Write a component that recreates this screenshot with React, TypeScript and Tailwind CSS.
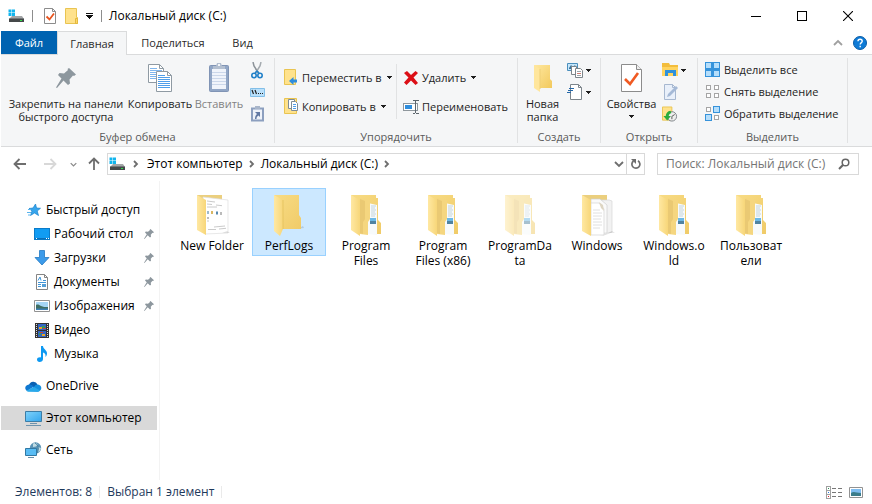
import type { ReactNode } from 'react';
import clsx from 'clsx';

/* ---------- icons ---------- */

function DriveIcon() {
  return (
    <svg width="16" height="16" viewBox="0 0 16 16">
      <path d="M4 8h10l2 3H1z" fill="#a3a5a7" />
      <path d="M1 10.500h15V14H1z" fill="#45484a" />
      <path d="M12 12h2v1h-2z" fill="#2fe04a" />
      <path d="M.5 1.500h3v3h-3zM4 1.500h3v3H4zM.5 5h3v3h-3zM4 5h3v3H4z" fill="#12b5ee" />
    </svg>
  );
}

function PageCheckIcon({ size }: { size: 'small' | 'large' }) {
  if (size === 'small') {
    return (
      <svg width="14" height="16" viewBox="0 0 14 16">
        <path d="M1.500 .5h8l3 3v12h-11z" fill="#fff" stroke="#8c8c8c" />
        <path d="M9.500 .5v3h3" fill="none" stroke="#8c8c8c" />
        <path d="M3.500 8.500l3 3 4.500-6" fill="none" stroke="#e8541e" strokeWidth="1.800" />
      </svg>
    );
  }
  return (
    <svg width="24" height="32" viewBox="0 0 24 32">
      <path d="M1.500 2.500h15l5 5v22h-20z" fill="#fff" stroke="#8c8c8c" />
      <path d="M16.500 2.500v5h5" fill="#eee" stroke="#8c8c8c" />
      <path d="M5 17l5 5 8-11" fill="none" stroke="#f05a22" strokeWidth="2.600" />
    </svg>
  );
}

function SmallFolderIcon() {
  return (
    <svg width="14" height="16" viewBox="0 0 14 16">
      <path d="M.5 .5h11v9h1v6H.5z" fill="#ffe28c" stroke="#e9c451" />
      <path d="M10.500 10.500h2v5h-2z" fill="#ffd667" stroke="#e2b93f" />
    </svg>
  );
}

function Caret() {
  return (
    <svg width="5" height="3" viewBox="0 0 5 3" shapeRendering="crispEdges">
      <path d="M0 0h5v1H0zM1 1h3v1H1zM2 2h1v1H2z" fill="#1e1e1e" />
    </svg>
  );
}

function PinIcon({ size }: { size: number }) {
  return (
    <svg width={size} height={size} viewBox="0 0 20 20">
      <path d="M13 0l7 6.500-2 1.500-1-.5-3.500 4 .5 4-2 1.500L7.500 12.500 1 20l-1-.5 5.500-9L2 7l1.500-2 4.500.5 4-3.500-.5-1z" fill="#8d979e" />
    </svg>
  );
}

function CopyIcon() {
  return (
    <svg width="26" height="32" viewBox="0 0 26 32">
      <path d="M1.500 2.500h11l4 4v14h-15z" fill="#fff" stroke="#8f9aa3" />
      <path d="M12.500 2.500v4h4" fill="none" stroke="#8f9aa3" />
      <path d="M3 6.500h7M3 8.500h12M3 10.500h12M3 12.500h12M3 14.500h12M3 16.500h12" stroke="#7fb6ee" />
      <path d="M9.500 9.500h11l4 4v16h-15z" fill="#fff" stroke="#8f9aa3" />
      <path d="M20.500 9.500v4h4" fill="none" stroke="#8f9aa3" />
      <path d="M11 13.500h7M11 15.500h12M11 17.500h12M11 19.500h12M11 21.500h12M11 23.500h12M11 25.500h12" stroke="#4f9eea" />
    </svg>
  );
}

function PasteIcon() {
  return (
    <svg width="22" height="32" viewBox="0 0 22 32">
      <rect x="1.500" y="3.500" width="19" height="26" rx="1" fill="#91a6c6" stroke="#8094b5" />
      <path d="M4 7h14v20H4z" fill="#f0f4fb" />
      <path d="M4 10.500h14M4 13.500h14M4 16.500h14M4 19.500h14M4 22.500h14" stroke="#cbd7ea" />
      <path d="M5 7V4h3l1-3h4l1 3h3v3z" fill="#b3bfd0" />
      <path d="M10 2h2v2h-2z" fill="#f4f6f9" />
    </svg>
  );
}

function CutIcon() {
  return (
    <svg width="12" height="17" viewBox="0 0 12 17" fill="none">
      <path d="M2 0l1 4 5 8" stroke="#8b9298" strokeWidth="1.500" />
      <path d="M10 0L9 4l-5 8" stroke="#a4aaaf" strokeWidth="1.500" />
      <circle cx="3" cy="13.500" r="2.200" stroke="#2281c9" strokeWidth="1.600" />
      <circle cx="9" cy="13.500" r="2.200" stroke="#2281c9" strokeWidth="1.600" />
      <path d="M4 11l2-2 2 2" stroke="#2281c9" strokeWidth="1.500" />
    </svg>
  );
}

function CopyPathIcon() {
  return (
    <svg width="15" height="9" viewBox="0 0 15 9">
      <path d="M.5 .5h14v8H.5z" fill="#b9e0fb" stroke="#82bfe8" />
      <path d="M2 2l1.500 4M5 2l1.500 4" stroke="#222" strokeWidth="1.200" />
      <path d="M8 5h1v1H8zM10 5h1v1h-1zM12 5h1v1h-1z" fill="#222" />
    </svg>
  );
}

function PasteShortcutIcon() {
  return (
    <svg width="13" height="16" viewBox="0 0 13 16">
      <path d="M1 2.500h11v12H1z" fill="#eef2f9" stroke="#8c9fbf" strokeWidth="2" />
      <path d="M4 0h5v3H4z" fill="#a8b5c9" />
      <path d="M4 6h5v5L7.500 9.500C6 10.500 5.500 11 5.500 13H4c0-2.500.5-3.500 2-5z" fill="#6279a3" />
    </svg>
  );
}

function MoveToIcon() {
  return (
    <svg width="15" height="17" viewBox="0 0 15 17">
      <path d="M.5 .5h11v15H.5z" fill="#ffe28c" stroke="#e9c451" />
      <path d="M5 12l4.500-4v2.500H13v3H9.500V16z" fill="#2f8ddd" />
    </svg>
  );
}

function CopyToIcon() {
  return (
    <svg width="15" height="17" viewBox="0 0 15 17">
      <path d="M.5 .5h12v15H.5z" fill="#ffe28c" stroke="#e9c451" />
      <path d="M4.500 1.500h6v9h-6z" fill="#fff" stroke="#7f8c96" />
      <path d="M7.500 3.500h4l2 2v7h-6z" fill="#fff" stroke="#7f8c96" />
      <path d="M9 6.500h3M9 8.500h3M9 10.500h3" stroke="#4f9eea" />
    </svg>
  );
}

function DeleteIcon() {
  return (
    <svg width="14" height="14" viewBox="0 0 14 14">
      <path d="M3 0l4 4 4.500-4L14 2l-4.500 4.500L14 12l-2.500 2L7 9.500 2.500 14 0 11.500l4.500-5L0 2z" fill="#dc0f16" />
    </svg>
  );
}

function RenameIcon() {
  return (
    <svg width="16" height="16" viewBox="0 0 16 16" shapeRendering="crispEdges">
      <path d="M.5 4.500h14v7H.5z" fill="#fff" stroke="#8f979d" />
      <path d="M2 6h7v4H2z" fill="#2f8ddd" />
      <path d="M12.500 1v13M10 1h2M13 1h3M10 14.500h2M13 14.500h3" stroke="#5d666d" />
    </svg>
  );
}

function NewFolderIcon() {
  return (
    <svg width="18" height="28" viewBox="0 0 18 28">
      <defs>
        <linearGradient id="newFolderBack" x1="0" y1="0" x2="1" y2="1">
          <stop offset="0" stopColor="#ffe8a0" />
          <stop offset="1" stopColor="#f2c95d" />
        </linearGradient>
      </defs>
      <path d="M0 1h16v14l2 2v7H4z" fill="url(#newFolderBack)" />
      <path d="M0 1l6 4v23l-6-4z" fill="#ffe69c" />
      <path d="M6 5v20" stroke="#efcf77" />
    </svg>
  );
}

function NewItemIcon() {
  return (
    <svg width="16" height="16" viewBox="0 0 16 16">
      <path d="M.5 1.500h10v7H.5z" fill="#c6e7fb" stroke="#4b8fbd" />
      <path d="M2 6l2-3 2 2 2-2 2 4H2z" fill="#38749f" />
      <path d="M4.500 4.500h5v8h-5z" fill="#fff" stroke="#7d858b" />
      <path d="M8.500 6.500h5l2 2v7h-7z" fill="#fff" stroke="#7d858b" />
      <path d="M10 9.500h4M10 13.500h4" stroke="#9aa3aa" />
      <path d="M10 11.500h4" stroke="#cd7b71" />
    </svg>
  );
}

function EasyAccessIcon() {
  return (
    <svg width="16" height="16" viewBox="0 0 16 16">
      <path d="M3.500 .5h8l3 3v12h-11z" fill="#fff" stroke="#7d858b" />
      <path d="M11.500 .5v3h3" fill="none" stroke="#7d858b" />
      <path d="M2 4.500h5M1 6.500h5M0 8.500h4" stroke="#2467a8" />
    </svg>
  );
}

function OpenIcon() {
  return (
    <svg width="16" height="16" viewBox="0 0 16 16">
      <path d="M0 1h7l1 2h8v11H0z" fill="#f3bd3c" />
      <path d="M0 5h16v9H0z" fill="#ffd45f" />
      <path d="M3 8h11v6h-3v-3H6v3H3z" fill="#2e91dc" />
    </svg>
  );
}

function EditIcon() {
  return (
    <svg width="15" height="16" viewBox="0 0 15 16">
      <path d="M1.500 .5h8l3 3v12h-11z" fill="#e9f0fa" stroke="#a7b8d0" />
      <path d="M9.500 .5v3h3" fill="none" stroke="#a7b8d0" />
      <path d="M4 13l1-3 8-8 2 2-8 8z" fill="#a5b9d6" />
    </svg>
  );
}

function HistoryIcon() {
  return (
    <svg width="17" height="17" viewBox="0 0 17 17">
      <path d="M.5 .5h10v14H.5z" fill="#ffe28c" stroke="#e9c451" />
      <circle cx="10.500" cy="10.500" r="5" fill="#eee" stroke="#7b8186" />
      <path d="M10.500 10.500l3-2M10.500 10.500v3" stroke="#555" />
      <path d="M9 4.500A6 6 0 0 0 4 10H1.500l4 5 4-5H7a4 4 0 0 1 3-3z" fill="#2cac3c" />
    </svg>
  );
}

const bigCells = ['M.5 .5h6v6h-6z', 'M8.500 .5h6v6h-6z', 'M.5 8.500h6v6h-6z', 'M8.500 8.500h6v6h-6z'];
const smallCells = ['M1.500 1.500h4v4h-4z', 'M9.500 1.500h4v4h-4z', 'M1.500 9.500h4v4h-4z', 'M9.500 9.500h4v4h-4z'];

function SelectIcon({ on }: { on: boolean[] }) {
  return (
    <svg width="16" height="16" viewBox="0 0 16 16" shapeRendering="crispEdges">
      {on.every(Boolean) && <path d="M0 0h15v15H0z" fill="#3693db" />}
      {on.map((active, i) => (
        <path
          key={bigCells[i]}
          d={active ? bigCells[i] : smallCells[i]}
          fill={active ? '#b5defb' : '#fff'}
          stroke={active ? '#3693db' : '#a5a5a5'}
        />
      ))}
    </svg>
  );
}

function ArrowIcon({ className, direction = 'left' }: { className: string; direction?: 'left' | 'right' | 'up' }) {
  const turn = { left: 0, up: 90, right: 180 }[direction];
  return (
    <svg width="14" height="14" viewBox="0 0 14 14" className={className}>
      <path d="M13 7H2M6.500 2L1.500 7l5 5" transform={`rotate(${turn} 7 7)`} fill="none" stroke="currentColor" strokeWidth="1.800" />
    </svg>
  );
}

function Chevron({ d, size, className }: { d: string; size: number; className: string }) {
  return (
    <svg width={size} height={size} viewBox="0 0 10 10" className={className}>
      <path d={d} fill="none" stroke="currentColor" strokeWidth="1.800" />
    </svg>
  );
}

function QuickAccessIcon() {
  return (
    <svg width="16" height="16" viewBox="0 0 16 16">
      <path d="M9.500 2l1 4 4 .3-3.300 2.700 1.300 4.500-4-2.500-4 2.500 1.500-4.500-3-2.500 4-.5z" fill="#37a5ec" stroke="#1681cd" strokeWidth=".7" />
      <path d="M2 7.500h3M1 10.500h4M2 13h2" stroke="#58b4ee" />
    </svg>
  );
}

function DesktopIcon() {
  return (
    <svg width="16" height="12" viewBox="0 0 16 12" shapeRendering="crispEdges">
      <path d="M.5 .5h15v11H.5z" fill="#119cf3" stroke="#0a7bc9" />
      <path d="M1 10h14v1H1z" fill="#0b6fb9" />
      <path d="M2 10h1v1H2zM12 10h1v1h-1zM14 10h1v1h-1z" fill="#fff" />
    </svg>
  );
}

function DownloadsIcon() {
  return (
    <svg width="16" height="16" viewBox="0 0 16 16">
      <path d="M5.500 .5h5v7h4.500L8 15 1 7.500h4.500z" fill="#3c9bea" stroke="#2378c2" strokeWidth=".8" />
    </svg>
  );
}

function DocumentsIcon() {
  return (
    <svg width="12" height="16" viewBox="0 0 12 16">
      <path d="M.5 .5h8l3 3v12H.5z" fill="#fff" stroke="#858585" />
      <path d="M8.500 .5v3h3" fill="none" stroke="#858585" />
      <path d="M2 6.500L4 3l1 3.500M7 6.500h3M2 8.500h8M2 10.500h3M2 12.500h3" fill="none" stroke="#3f95d8" />
      <path d="M6 10h4v3H6z" fill="#569fd6" />
    </svg>
  );
}

function PictureIcon() {
  return (
    <svg width="16" height="12" viewBox="0 0 16 12">
      <path d="M.5 .5h15v11H.5z" fill="#fff" stroke="#929292" />
      <path d="M2 2h12v8H2z" fill="#a5d5f5" />
      <path d="M2 5c2-1 3 0 5 1s4 1 7 1v3H2z" fill="#3f6e63" />
      <path d="M2 8.500h12V10H2z" fill="#3c7fb5" />
    </svg>
  );
}

function VideoIcon() {
  return (
    <svg width="14" height="15" viewBox="0 0 14 15" shapeRendering="crispEdges">
      <path d="M0 0h14v15H0z" fill="#333" />
      <path d="M3 1h8v6H3zM3 8h8v6H3z" fill="#3465c3" />
      <path d="M4 4h3v2H4zM7 11h3v2H7z" fill="#e7a527" />
      <path d="M7 3h3v2H7zM4 10h2v2H4z" fill="#379b54" />
      <path d="M8 5h3v1H8zM5 9h3v1H5z" fill="#ca4138" />
      <path d="M1.500 1v14M12.500 1v14" stroke="#ddd" strokeDasharray="1 1" />
    </svg>
  );
}

function MusicIcon() {
  return (
    <svg width="12" height="16" viewBox="0 0 12 16">
      <path d="M5 0h2c0 3 4 4 4 7.500 0 2-1 3-1.500 3.500.5-3-1-4-2.500-4.500V13c0 2-1.500 3-3.500 3C2 16 1 15 1 13.500 1 12 3 11 5 11.500z" fill="#0d99f2" />
    </svg>
  );
}

function OneDriveIcon() {
  return (
    <svg width="17" height="11" viewBox="0 0 17 11">
      <path d="M4 4a4.500 4.500 0 0 1 8.500-.5L9 7z" fill="#0a61b3" />
      <path d="M4 3.500c2-.3 3 .5 5 2L2 10C-1 8 0 4 4 3.500z" fill="#0f78d1" />
      <path d="M9 6c1-2 2.500-2.700 4-2.500 4 .5 5 6-.5 7.300L2 10z" fill="#1490df" />
      <path d="M1.500 9.700L9 6l6 3.500c-.7.9-1.500 1.300-3 1.300H4c-1 0-2-.5-2.500-1.100z" fill="#29a9ea" />
    </svg>
  );
}

function ComputerIcon() {
  return (
    <svg width="17" height="15" viewBox="0 0 17 15">
      <defs>
        <linearGradient id="screen" x1="0" y1="0" x2="1" y2="1">
          <stop offset="0" stopColor="#80d3fb" />
          <stop offset="1" stopColor="#32a5ed" />
        </linearGradient>
      </defs>
      <path d="M.5 .5h16v10H.5z" fill="url(#screen)" stroke="#3c7da6" />
      <path d="M5 12.500h7M1 14.500h15" stroke="#6d93ad" />
    </svg>
  );
}

function NetworkIcon() {
  return (
    <svg width="17" height="16" viewBox="0 0 17 16">
      <circle cx="10.500" cy="6" r="5.700" fill="#5b93b5" />
      <path d="M8 1.500c2-1 4-.5 5 1l-2 2-3 .5zM13 5l3 1-1 3-2 1z" fill="#c1dbe2" />
      <path d="M10 1c4 2 4 7 2 10" fill="none" stroke="#437f9f" />
      <path d="M.5 6.500h11v7H.5z" fill="#58bcf4" stroke="#3178a3" />
      <path d="M3 15.500h6" stroke="#688fa9" />
    </svg>
  );
}

type FolderKind = 'list' | 'empty' | 'files' | 'papers';

function FolderIcon({ kind, faded }: { kind: FolderKind; faded?: boolean }) {
  return (
    <svg width="36" height="42" viewBox="0 0 36 42" className={faded ? 'opacity-50' : ''}>
      <defs>
        <linearGradient id="folderBack" x1="0" y1="0" x2="1" y2="1">
          <stop offset="0" stopColor="#f8dc85" />
          <stop offset="1" stopColor="#f0cb68" />
        </linearGradient>
        <linearGradient id="folderFront" x1="0" y1="0" x2="1" y2="0">
          <stop offset="0" stopColor="#ffe8a2" />
          <stop offset="1" stopColor="#f7d679" />
        </linearGradient>
      </defs>
      {kind === 'empty' && (
        <>
          <path d="M26 35l6-3 1 2-8 1z" fill="#000" opacity=".12" />
          <path d="M3 1h25v20l2 3v11H10z" fill="url(#folderBack)" />
          <path d="M3 1l9 5v29l-3 7-6-5z" fill="url(#folderFront)" />
          <path d="M12 6v29" stroke="#ddb853" strokeWidth=".6" />
        </>
      )}
      {kind === 'list' && (
        <>
          <path d="M3 1h25v6H3z" fill="#ebcf7e" />
          <path d="M9 3l25 3v33l-23 1z" fill="#fff" stroke="#dedede" strokeWidth=".7" />
          <path d="M13 7l8 1M13 10l5 .5M22 11l6 .7M13 13h10M13 27h2M20 33l11-1M14 35.500h8M25 35l7-.7" stroke="#bdbdbd" strokeWidth=".8" />
          <path d="M13 17h2v3h-2z" fill="#9dbace" />
          <path d="M17 17h2v3h-2z" fill="#d9b763" />
          <path d="M22 17.500h2v3h-2z" fill="#5688b0" />
          <path d="M26 18h2v3h-2zM13 23h2v2h-2z" fill="#bbb" />
          <path d="M3 1l9 5v35l-9-5z" fill="url(#folderFront)" />
          <path d="M33 37l3 2-8 0z" fill="#000" opacity=".1" />
        </>
      )}
      {kind === 'files' && (
        <>
          <path d="M3 1h25v3h2v22l3 3v11H10z" fill="url(#folderBack)" />
          <path d="M20 9l9 2v30l-9-1z" fill="#f7fafb" />
          <path d="M23 12h5M23 14h4M23 16h5M23 18h4M23 20h5M23 22h4" stroke="#b7cad4" strokeWidth=".8" />
          <path d="M22 24h6v3h-6z" fill="#6cb9e6" />
          <path d="M22 27h6v3h-6z" fill="#326d91" opacity=".85" />
          <path d="M12 4l10 2v19l-2 3v13l-8-1z" fill="#f5d67f" />
          <path d="M12 5l5 2v18l-2 3v12l-3-1z" fill="#e3c06b" opacity=".6" />
          <path d="M3 1l9 5v36l-9-6z" fill="url(#folderFront)" />
        </>
      )}
      {kind === 'papers' && (
        <>
          <path d="M3 1h25v6H3z" fill="#ebcf7e" />
          <path d="M14 6h16l3 1v31l-8 3-11-1z" fill="#f2f2f2" stroke="#d7d7d7" strokeWidth=".7" />
          <path d="M12 5h9l7 6v28l-16 1z" fill="#fafafa" stroke="#cfcfcf" strokeWidth=".7" />
          <path d="M12 9h8l5 6v26H12z" fill="#fff" stroke="#d2d2d2" strokeWidth=".7" />
          <path d="M14 16h7M14 19h9M14 22h9M14 25h8M14 28h9M14 31h9M14 34h7" stroke="#e0e0e0" />
          <path d="M20 8l4 3 1 6-3-3z" fill="#ddd5c2" />
          <path d="M3 1l9 5v36l-9-5z" fill="url(#folderFront)" />
          <path d="M33 37l3 2-8 0z" fill="#000" opacity=".1" />
        </>
      )}
    </svg>
  );
}

/* ---------- ribbon ---------- */

function RibbonGroup({ title, className, children }: { title: string; className: string; children: ReactNode }) {
  return (
    <section className={clsx('flex shrink-0 flex-col', className)} aria-label={title}>
      <div className="flex h-[73px]">{children}</div>
      <div className="h-[18px] text-center leading-[18px] text-[#5a5a5a]">{title}</div>
    </section>
  );
}

function Separator() {
  return <div className="my-[3px] w-px shrink-0 bg-[#e1e2e3]" />;
}

function BigButton({ icon, lines, className, children }: { icon: ReactNode; lines: string[]; className: string; children?: ReactNode }) {
  return (
    <button className={clsx('flex shrink-0 flex-col items-center pt-[7px]', className)}>
      <span className="flex h-8 items-center justify-center">{icon}</span>
      <span className="mt-[3px] leading-[13px] whitespace-nowrap">
        {lines.map((line) => (
          <span key={line} className="block">{line}</span>
        ))}
      </span>
      {children}
    </button>
  );
}

function SmallButton({ icon, label, text, caret, className }: { icon: ReactNode; label: string; text?: boolean; caret?: boolean; className: string }) {
  return (
    <button className={clsx('flex items-center gap-[3px] whitespace-nowrap', className)} aria-label={label}>
      <span className="flex w-4 shrink-0 justify-center">{icon}</span>
      {text && <span>{label}</span>}
      {caret && <span className={clsx(text && 'pl-0.5')}><Caret /></span>}
    </button>
  );
}

function Ribbon() {
  return (
    <div className="flex h-[92px] overflow-hidden border-b border-[#dadbdc] bg-[#f5f6f7] text-[11px] text-[#1e1e1e]">
      <RibbonGroup title="Буфер обмена" className="w-[273px]">
        <BigButton className="w-[130px]" icon={<PinIcon size={20} />} lines={['Закрепить на панели', 'быстрого доступа']} />
        <BigButton className="w-[58px]" icon={<CopyIcon />} lines={['Копировать']} />
        <BigButton className="w-[60px] text-[#838383]" icon={<PasteIcon />} lines={['Вставить']} />
        <div className="flex flex-col pt-1">
          <SmallButton className="h-[22px]" icon={<CutIcon />} label="Вырезать" />
          <SmallButton className="h-[22px]" icon={<CopyPathIcon />} label="Скопировать путь" />
          <SmallButton className="h-[22px]" icon={<PasteShortcutIcon />} label="Вставить ярлык" />
        </div>
      </RibbonGroup>
      <Separator />
      <RibbonGroup title="Упорядочить" className="w-[242px]">
        <div className="flex w-[121px] flex-col pt-2 pl-2">
          <SmallButton className="h-[29px]" icon={<MoveToIcon />} label="Переместить в" text caret />
          <SmallButton className="h-[29px]" icon={<CopyToIcon />} label="Копировать в" text caret />
        </div>
        <div className="mt-[9px] h-[55px] w-px bg-[#e1e2e3]" />
        <div className="flex flex-col pt-2 pl-1.5">
          <SmallButton className="h-[29px]" icon={<DeleteIcon />} label="Удалить" text caret />
          <SmallButton className="h-[29px]" icon={<RenameIcon />} label="Переименовать" text />
        </div>
      </RibbonGroup>
      <Separator />
      <RibbonGroup title="Создать" className="w-[82px]">
        <BigButton className="w-[49px]" icon={<NewFolderIcon />} lines={['Новая', 'папка']} />
        <div className="flex flex-col pt-1">
          <SmallButton className="h-[22px]" icon={<NewItemIcon />} label="Создать элемент" caret />
          <SmallButton className="h-[22px]" icon={<EasyAccessIcon />} label="Простой доступ" caret />
        </div>
      </RibbonGroup>
      <Separator />
      <RibbonGroup title="Открыть" className="w-24">
        <BigButton className="w-[61px]" icon={<PageCheckIcon size="large" />} lines={['Свойства']}>
          <span className="mt-[5px]"><Caret /></span>
        </BigButton>
        <div className="flex flex-col pt-1">
          <SmallButton className="h-[22px]" icon={<OpenIcon />} label="Открыть" caret />
          <SmallButton className="h-[22px]" icon={<EditIcon />} label="Изменить" />
          <SmallButton className="h-[22px]" icon={<HistoryIcon />} label="Журнал" />
        </div>
      </RibbonGroup>
      <Separator />
      <RibbonGroup title="Выделить" className="w-[149px]">
        <div className="flex flex-col pt-1 pl-[7px]">
          <SmallButton className="h-[22px]" icon={<SelectIcon on={[true, true, true, true]} />} label="Выделить все" text />
          <SmallButton className="h-[22px]" icon={<SelectIcon on={[false, false, false, false]} />} label="Снять выделение" text />
          <SmallButton className="h-[22px]" icon={<SelectIcon on={[false, true, true, false]} />} label="Обратить выделение" text />
        </div>
      </RibbonGroup>
      <Separator />
    </div>
  );
}

/* ---------- window parts ---------- */

function TitleBar() {
  return (
    <header className="flex h-[31px] items-center pr-px pl-[7px]">
      <DriveIcon />
      <div className="mx-2 h-3 w-px bg-[#8d8d8d]" />
      <button aria-label="Свойства" className="mr-2 ml-0.5"><PageCheckIcon size="small" /></button>
      <button aria-label="Новая папка"><SmallFolderIcon /></button>
      <button aria-label="Настройка панели" className="ml-1.5 flex w-[9px] justify-center">
        <svg width="7" height="6" viewBox="0 0 7 6" shapeRendering="crispEdges">
          <path d="M0 0h7v1H0zM0 2h7v1H0zM1 3h5v1H1zM2 4h3v1H2zM3 5h1v1H3z" fill="#111" />
        </svg>
      </button>
      <div className="mx-[7px] h-3 w-px bg-[#8d8d8d]" />
      <h1 className="text-black">Локальный диск (C:)</h1>
      <div className="ml-auto flex h-full">
        <button aria-label="Свернуть" className="flex w-[46px] items-center justify-center">
          <svg width="10" height="10" viewBox="0 0 10 10" shapeRendering="crispEdges"><path d="M0 5h10v1H0z" /></svg>
        </button>
        <button aria-label="Развернуть" className="flex w-[46px] items-center justify-center">
          <svg width="10" height="10" viewBox="0 0 10 10" shapeRendering="crispEdges"><path d="M.5 .5h9v9h-9z" fill="none" stroke="#000" /></svg>
        </button>
        <button aria-label="Закрыть" className="flex w-[46px] items-center justify-center">
          <svg width="10" height="10" viewBox="0 0 10 10"><path d="M0 0l10 10M10 0L0 10" stroke="#000" strokeWidth="1.100" /></svg>
        </button>
      </div>
    </header>
  );
}

function Tabs() {
  return (
    <div className="flex h-6 border-b border-[#dadbdc] text-[11px] text-[#2b2b2b]">
      <button className="w-14 bg-[#0063b1] text-white">Файл</button>
      <button className="-mb-px h-6 w-[70px] border-x border-t border-[#dadbdc] bg-[#f5f6f7]">Главная</button>
      <button className="w-[92px]">Поделиться</button>
      <button className="w-[47px]">Вид</button>
      <div className="ml-auto flex items-center gap-2.5 pr-[5px]">
        <button aria-label="Свернуть ленту">
          <Chevron d="M1 7l4-4 4 4" size={10} className="text-[#a0a0a0]" />
        </button>
        <button aria-label="Справка">
          <svg width="14" height="14" viewBox="0 0 14 14">
            <circle cx="7" cy="7" r="6.500" fill="#0f7bd6" stroke="#0a5ca6" />
            <path d="M5 5.200c0-2.600 4.200-2.600 4.200 0C9.200 6.700 7.200 6.500 7.200 8.500M7.200 9.800v1.500" fill="none" stroke="#fff" strokeWidth="1.400" />
          </svg>
        </button>
      </div>
    </div>
  );
}

const right = 'M3 2l3 3-3 3';
const down = 'M1 3l4 4 4-4';

function AddressBar() {
  return (
    <div className="flex items-center pt-1.5 pr-[13px] pb-1.5 pl-3">
      <button aria-label="Назад"><ArrowIcon className="text-[#6e6e6e]" /></button>
      <button aria-label="Вперед" className="ml-4"><ArrowIcon direction="right" className="text-[#d8d8d8]" /></button>
      <button aria-label="Последние" className="ml-[13px]"><Chevron d={down} size={7} className="text-[#8a8a8a]" /></button>
      <button aria-label="Вверх" className="ml-2.5"><ArrowIcon direction="up" className="text-[#6e6e6e]" /></button>
      <div className="ml-1.5 flex h-[22px] min-w-0 flex-1 items-center border border-[#d9d9d9] pl-px text-black">
        <DriveIcon />
        <Chevron d={right} size={10} className="ml-1.5 text-[#6e6e6e]" />
        <button className="ml-1.5">Этот компьютер</button>
        <Chevron d={right} size={10} className="ml-1 text-[#6e6e6e]" />
        <button className="ml-1">Локальный диск (C:)</button>
        <Chevron d={right} size={10} className="ml-1 text-[#6e6e6e]" />
        <button aria-label="Предыдущие расположения" className="mr-0.5 ml-auto"><Chevron d={down} size={10} className="text-[#6e6e6e]" /></button>
        <button aria-label="Обновить" className="flex h-full w-[18px] items-center justify-center border-l border-[#d9d9d9]">
          <svg width="10" height="12" viewBox="0 0 10 12">
            <path d="M7 2.800A4 4 0 1 1 2.500 3" fill="none" stroke="#6e6e6e" strokeWidth="1.700" />
            <path d="M0 1h5v5z" fill="#6e6e6e" />
          </svg>
        </button>
      </div>
      <label className="ml-3 flex h-[22px] w-[202px] items-center border border-[#d9d9d9] pr-2 pl-2">
        <input aria-label="Поиск" placeholder="Поиск: Локальный диск (C:)" className="w-0 min-w-0 flex-1 placeholder:text-[#757575] outline-none" />
        <svg width="12" height="12" viewBox="0 0 12 12">
          <circle cx="7.500" cy="4.500" r="3.300" fill="none" stroke="#666" strokeWidth="1.500" />
          <path d="M5.200 6.800L1 11" stroke="#666" strokeWidth="2" />
        </svg>
      </label>
    </div>
  );
}

const quickAccess = [
  { icon: <DesktopIcon />, label: 'Рабочий стол', pinned: true },
  { icon: <DownloadsIcon />, label: 'Загрузки', pinned: true },
  { icon: <DocumentsIcon />, label: 'Документы', pinned: true },
  { icon: <PictureIcon />, label: 'Изображения', pinned: true },
  { icon: <VideoIcon />, label: 'Видео', pinned: false },
  { icon: <MusicIcon />, label: 'Музыка', pinned: false },
];

function NavItem({ icon, label, nested, pinned, selected }: { icon: ReactNode; label: string; nested?: boolean; pinned?: boolean; selected?: boolean }) {
  return (
    <a
      href="#"
      className={clsx('mr-0.5 flex h-6 items-center gap-1 pr-[3px] text-black', nested ? 'pl-8' : 'pl-6', selected && 'bg-[#d9d9d9]')}
    >
      <span className="flex w-[17px] shrink-0 justify-center">{icon}</span>
      <span className="whitespace-nowrap">{label}</span>
      {pinned && <span className="ml-auto"><PinIcon size={10} /></span>}
    </a>
  );
}

function Sidebar() {
  return (
    <nav className="flex w-[159px] shrink-0 flex-col gap-2 border-r border-[#f3f3f3] pt-[17px]">
      <div>
        <NavItem icon={<QuickAccessIcon />} label="Быстрый доступ" />
        {quickAccess.map((item) => (
          <NavItem key={item.label} {...item} nested />
        ))}
      </div>
      <NavItem icon={<OneDriveIcon />} label="OneDrive" />
      <NavItem icon={<ComputerIcon />} label="Этот компьютер" selected />
      <NavItem icon={<NetworkIcon />} label="Сеть" />
    </nav>
  );
}

const folders: { lines: string[]; kind: FolderKind; faded?: boolean; selected?: boolean }[] = [
  { lines: ['New Folder'], kind: 'list' },
  { lines: ['PerfLogs'], kind: 'empty', selected: true },
  { lines: ['Program', 'Files'], kind: 'files' },
  { lines: ['Program', 'Files (x86)'], kind: 'files' },
  { lines: ['ProgramDa', 'ta'], kind: 'files', faded: true },
  { lines: ['Windows'], kind: 'papers' },
  { lines: ['Windows.o', 'ld'], kind: 'files' },
  { lines: ['Пользоват', 'ели'], kind: 'files' },
];

function FileList() {
  return (
    <main className="flex flex-1 flex-wrap content-start items-start gap-[3px] pt-[7px] pl-[15px]">
      {folders.map((folder) => (
        <button
          key={folder.lines.join('')}
          className={clsx(
            'flex w-[74px] flex-col items-center border pt-[5px] pb-0.5 text-black',
            folder.selected ? 'border-[#99d1ff] bg-[#cce8ff]' : 'border-transparent',
          )}
        >
          <FolderIcon kind={folder.kind} faded={folder.faded} />
          <span className="mt-0.5 leading-[15px] whitespace-nowrap">
            {folder.lines.map((line) => (
              <span key={line} className="block">{line}</span>
            ))}
          </span>
        </button>
      ))}
    </main>
  );
}

function StatusBar() {
  return (
    <footer className="flex h-6 items-center pr-[9px] pl-3.5 text-[#1e395b]">
      <span>Элементов: 8</span>
      <div className="mx-[7px] h-3 w-px bg-[#eaeaea]" />
      <span>Выбран 1 элемент</span>
      <div className="mx-[7px] h-3 w-px bg-[#eaeaea]" />
      <div className="ml-auto flex items-center gap-[7px]">
        <button aria-label="Таблица">
          <svg width="16" height="13" viewBox="0 0 16 13" shapeRendering="crispEdges">
            <path d="M.5 .5h4v12h-4zM0 4.500h5M0 8.500h5" fill="#fff" stroke="#a0a0a0" />
            <path d="M2 2h1v1H2z" fill="#2b8f52" />
            <path d="M2 6h1v1H2z" fill="#2678e0" />
            <path d="M2 10h1v1H2z" fill="#e0202c" />
            <path d="M6 2.500h4M12 2.500h4M6 6.500h4M12 6.500h4M6 10.500h4M12 10.500h4" stroke="#777" />
          </svg>
        </button>
        <button aria-label="Крупные значки">
          <svg width="14" height="11" viewBox="0 0 14 11">
            <path d="M.5 .5h13v10H.5z" fill="#fff" stroke="#929292" />
            <path d="M2 2h10v7H2z" fill="#7fbdf0" />
            <path d="M2 6c3-2 5 0 10 0v3H2z" fill="#3c7d8a" />
          </svg>
        </button>
      </div>
    </footer>
  );
}

export default function App() {
  return (
    <div className="flex min-h-screen flex-col bg-white pl-px font-['Open_Sans','Noto_Sans',sans-serif] text-[12px] leading-4">
      <TitleBar />
      <Tabs />
      <Ribbon />
      <AddressBar />
      <div className="flex flex-1">
        <Sidebar />
        <FileList />
      </div>
      <StatusBar />
    </div>
  );
}
